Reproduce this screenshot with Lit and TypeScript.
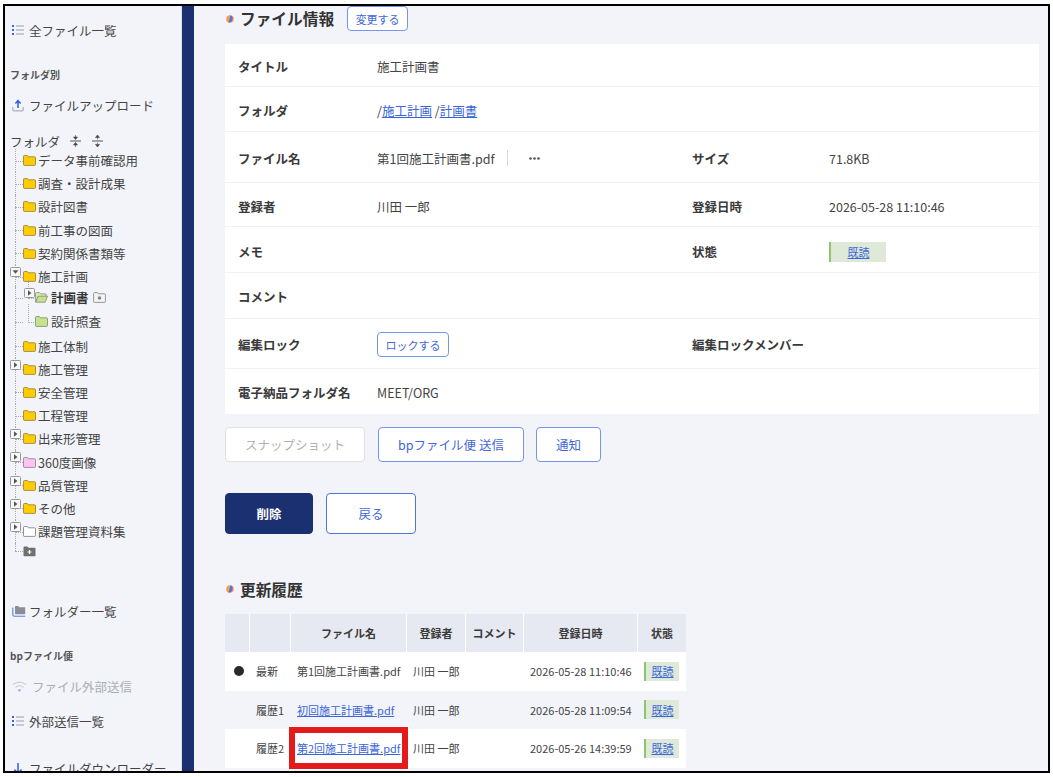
import { LitElement, css, html, svg } from 'lit';
import { customElement } from 'lit/decorators.js';
import { classMap } from 'lit/directives/class-map.js';

type Node = {
  label: string;
  kind?: 'yellow' | 'pink' | 'white' | 'green' | 'open';
  exp?: 'open' | 'closed';
  child?: boolean;
  nudge?: string;
  bold?: boolean;
};

const TREE: Node[] = [
  { label: 'データ事前確認用' },
  { label: '調査・設計成果' },
  { label: '設計図書' },
  { label: '前工事の図面' },
  { label: '契約関係書類等' },
  { label: '施工計画', exp: 'open' },
  { label: '計画書', kind: 'open', exp: 'closed', child: true, nudge: 'up2', bold: true },
  { label: '設計照査', kind: 'green', child: true, nudge: 'down1' },
  { label: '施工体制', nudge: 'down1' },
  { label: '施工管理', exp: 'closed' },
  { label: '安全管理' },
  { label: '工程管理' },
  { label: '出来形管理', exp: 'closed' },
  { label: '360度画像', kind: 'pink', exp: 'closed' },
  { label: '品質管理', exp: 'closed' },
  { label: 'その他', exp: 'closed' },
  { label: '課題管理資料集', kind: 'white', exp: 'closed' },
];

const HISTORY = [
  { mark: true, tag: '最新', file: '第1回施工計画書.pdf', link: false, date: '2026-05-28 11:10:46', alt: false, red: false },
  { mark: false, tag: '履歴1', file: '初回施工計画書.pdf', link: true, date: '2026-05-28 11:09:54', alt: true, red: false },
  { mark: false, tag: '履歴2', file: '第2回施工計画書.pdf', link: true, date: '2026-05-26 14:39:59', alt: false, red: true },
];

const FOLDER_COLORS = {
  yellow: ['#ffcc00', '#8f7d3a'],
  pink: ['#ffc4f2', '#8a7a88'],
  white: ['#ffffff', '#77797f'],
  green: ['#c6e28e', '#7d8a6a'],
};

const folderIcon = (kind: Node['kind'] = 'yellow') => {
  if (kind === 'open') {
    return html`<svg class="folder" width="13" height="11" viewBox="0 0 13 11">
      <path d="M.6 10V1.400c0-.5.3-.8.8-.8h3l1.100 1.300h4.800c.5 0 .8.3.8.8v1.300" fill="#dcebbd" stroke="#7d8a6a" stroke-width=".8"/>
      <path d="M.6 10.200l2.400-6h9.500l-2.400 6z" fill="#c6e28e" stroke="#7d8a6a" stroke-width=".8"/>
    </svg>`;
  }
  const [fill, line] = FOLDER_COLORS[kind];
  return html`<svg class="folder" width="13" height="11" viewBox="0 0 13 11">
    <path d="M.5 1.400C.5.900.8.500 1.300.500h3l1.100 1.300h6.300c.5 0 .8.300.8.800v7c0 .5-.3.800-.8.800H1.300c-.5 0-.8-.3-.8-.8z" fill=${fill} stroke=${line} stroke-width=".8"/>
  </svg>`;
};

const listIcon = html`<svg width="12" height="10" viewBox="0 0 12 10">
  <path d="M0 0h2v2H0zM0 4h2v2H0zM0 8h2v2H0z" fill="#3f63e0"/>
  <path d="M4 1h8M4 5h8M4 9h8" stroke="#9a9ea8" stroke-width="1"/>
</svg>`;

const uploadIcon = html`<svg width="12" height="13" viewBox="0 0 12 13">
  <path d="M.8 8v2.600c0 .8.5 1.300 1.200 1.300h8c.7 0 1.200-.5 1.200-1.300V8" fill="none" stroke="#a9adb5" stroke-width="1.200"/>
  <path d="M6 9V2M3.400 4.400L6 1.600l2.600 2.800" fill="none" stroke="#2f5fe0" stroke-width="1.500"/>
</svg>`;

const foldersIcon = html`<svg width="14" height="12" viewBox="0 0 14 12">
  <path d="M.8 2.500v7c0 1 .6 1.700 1.600 1.700h10.800" fill="none" stroke="#5b7de8" stroke-width="1.100"/>
  <path d="M3 1.600c0-.4.2-.6.6-.6h2.600l1 1.200h5.400c.4 0 .6.2.6.6v5.800c0 .4-.2.6-.6.6H3.600c-.4 0-.6-.2-.6-.6z" fill="#8b8e96"/>
</svg>`;

const wifiIcon = html`<svg width="15" height="11" viewBox="0 0 15 11">
  <path d="M.8 3.600C4.600.4 10.400.4 14.200 3.600M3.600 6.200c2.300-1.700 5.500-1.700 7.800 0" fill="none" stroke="#c3c7cf" stroke-width="1.100"/>
  <circle cx="7.500" cy="9.200" r="1.300" fill="#9db2ee"/>
</svg>`;

const downIcon = html`<svg width="12" height="13" viewBox="0 0 12 13">
  <path d="M6 1v10M2.400 7.600L6 11.200l3.600-3.600" fill="none" stroke="#2f5fe0" stroke-width="1.500"/>
</svg>`;

const foldAll = (arrowsIn: boolean) => html`<svg class="fold" width="11" height="12" viewBox="0 0 11 12">
  <path d="M0 6h11" stroke="#555" stroke-width="1"/>
  ${arrowsIn
    ? svg`<path d="M5.500 0v2M3.500 2h4L5.500 4.600zM5.500 12v-2M3.500 10h4L5.500 7.400z" fill="#444" stroke="#444" stroke-width=".6"/>`
    : svg`<path d="M5.500 2.500v2M3.500 2.600h4L5.500 0zM5.500 9.500v-2M3.500 9.400h4L5.500 12z" fill="#444" stroke="#444" stroke-width=".6"/>`}
</svg>`;

const expander = (state: 'open' | 'closed') => html`<svg class="exp" width="11" height="10" viewBox="0 0 11 10">
  <rect x=".5" y=".5" width="10" height="9" rx="1" fill="#f7f7f7" stroke="#999"/>
  ${state === 'open'
    ? svg`<path d="M2.600 3.200h5.800L5.500 6.800z" fill="#555"/>`
    : svg`<path d="M4 2.200v5.600L7.400 5z" fill="#555"/>`}
</svg>`;

const dot = html`<svg class="dot" width="8" height="8" viewBox="0 0 8 8">
  <circle cx="4" cy="4" r="3.800" fill="#f59a52"/>
  <path d="M4.400.2A3.800 3.800 0 0 1 2.200 7.400C3.600 5.400 3.800 2.400 4.400.2z" fill="#4f72e6"/>
</svg>`;

@customElement('app-root')
export class AppRoot extends LitElement {
  static styles = css`
    :host {
      display: block;
      padding: 4px 3px;
      height: 777px;
      box-sizing: border-box;
      background: #fff;
      font-family: 'Noto Sans CJK JP', 'Noto Sans', sans-serif;
      font-size: 12.5px;
      color: #444;
    }
    .frame {
      display: flex;
      height: 769px;
      border: 2px solid #000;
      box-sizing: border-box;
      overflow: hidden;
      background: #f2f4f9;
    }
    a {
      color: #3a66d8;
      text-decoration: underline;
    }

    /* sidebar */
    .side {
      width: 177px;
      flex: none;
      padding: 12px 0 0 7px;
      box-sizing: border-box;
      border-right: 1px solid #dfe1e6;
    }
    .nav {
      display: flex;
      align-items: center;
      gap: 5px;
      height: 24px;
      white-space: nowrap;
    }
    .nav.tight {
      gap: 3px;
    }
    .nav.off {
      color: #aaadb3;
    }
    .sec {
      height: 16px;
      line-height: 16px;
      margin-left: -2px;
      font-size: 10px;
      font-weight: 700;
      color: #555;
    }
    .folders-head {
      display: flex;
      align-items: center;
      height: 20px;
      margin: 14px 0 0 -2px;
      color: #444;
    }
    .fold {
      margin-left: 10px;
    }
    .fold + .fold {
      margin-left: 11px;
    }
    .tree {
      margin: -2px 0 0 -7px;
    }
    .row {
      position: relative;
      display: flex;
      align-items: center;
      gap: 2px;
      height: 23.2px;
      padding-left: 18px;
      white-space: nowrap;
    }
    .row::before {
      content: '';
      position: absolute;
      left: 10px;
      top: 0;
      bottom: 0;
      border-left: 1px dotted #aaa;
    }
    .row::after {
      content: '';
      position: absolute;
      left: 10px;
      width: 8px;
      top: 50%;
      border-top: 1px dotted #aaa;
    }
    .row.child {
      gap: 3px;
      padding-left: 30px;
    }
    .row.child .line {
      position: absolute;
      left: 23px;
      top: -6px;
      height: 18px;
      width: 7px;
      border-left: 1px dotted #aaa;
      border-bottom: 1px dotted #aaa;
    }
    .row.up2 {
      margin-top: -2px;
    }
    .row.down1 {
      margin-top: 1px;
    }
    .row.bold {
      font-weight: 700;
      color: #333;
    }
    .row.add {
      height: 16px;
    }
    .row.add::before {
      bottom: 50%;
    }
    .exp {
      position: absolute;
      left: 5px;
      top: 2px;
      z-index: 1;
    }
    .row.child .exp {
      left: 19px;
    }
    .cam {
      margin-left: 1px;
    }

    /* navy strip */
    .strip {
      width: 12px;
      flex: none;
      background: #1b3070;
    }

    /* main */
    .main {
      flex: 1;
      min-width: 0;
      padding: 0 9px 0 31px;
    }
    .head {
      display: flex;
      align-items: center;
      height: 25px;
      margin-bottom: 13px;
    }
    .head h2 {
      margin: 0 13px 0 6px;
      font-size: 15.7px;
      font-weight: 700;
      color: #333;
    }
    .dot {
      margin-left: 1px;
    }
    .btn {
      display: inline-flex;
      align-items: center;
      justify-content: center;
      box-sizing: border-box;
      background: #fff;
      border: 1.5px solid #7795ea;
      border-radius: 4px;
      color: #4267d8;
      white-space: nowrap;
    }
    .btn.small {
      height: 25px;
      font-size: 11px;
    }
    .info {
      display: grid;
      grid-template-rows: 43px 45px 51px 44px 46px 46px 50px 45px;
      background: #fff;
    }
    .info-row {
      display: grid;
      grid-template-columns: 152px 315px 137px 1fr;
      align-items: center;
      border-bottom: 1px solid #f1f2f5;
      padding-top: 2px;
      box-sizing: border-box;
    }
    .info-row:nth-child(4),
    .info-row:nth-child(5) {
      padding-top: 4px;
    }
    .info-row:last-child {
      border-bottom: none;
    }
    .lab {
      padding-left: 13px;
      font-weight: 700;
      color: #3a3a3a;
      white-space: nowrap;
    }
    .lab.second {
      padding-left: 0;
    }
    .val {
      white-space: nowrap;
      display: flex;
      align-items: center;
    }
    .sep {
      width: 1px;
      height: 16px;
      background: #d9d9d9;
      margin: 0 21px 0 13px;
    }
    .more {
      width: 11px;
      height: 3px;
    }
    .badge {
      display: flex;
      align-items: center;
      justify-content: center;
      box-sizing: border-box;
      background: #dfe9d8;
      border-left: 2px solid #8cc56f;
      font-size: 11px;
    }
    .badge.big {
      width: 57px;
      height: 20px;
    }
    .actions {
      display: flex;
      margin-top: 13px;
    }
    .btn.mid {
      height: 35px;
      font-size: 12.5px;
    }
    .snap {
      width: 140px;
      margin-right: 13px;
      border-color: #e2e2e2;
      color: #b4b1ad;
    }
    .bp {
      width: 146px;
      margin-right: 12px;
    }
    .notify {
      width: 65px;
    }
    .actions2 {
      display: flex;
      margin-top: 31px;
      gap: 13px;
    }
    .btn.large {
      height: 41px;
      font-size: 12.5px;
      border-width: 1px;
      border-color: #4f74e0;
    }
    .del {
      width: 88px;
      background: #1b3070;
      border-color: #1b3070 !important;
      color: #fff;
      font-weight: 700;
    }
    .back {
      width: 90px;
    }
    .head.hist {
      margin: 43px 0 13px;
      height: 24px;
    }

    /* history table */
    .hist-table {
      width: 461px;
      font-size: 11px;
    }
    .tr {
      display: grid;
      grid-template-columns: 24px 40px 115px 58px 57px 113px 48px;
      column-gap: 1px;
      height: 38.5px;
      align-items: center;
      background: #fff;
    }
    .tr.alt {
      background: #f2f4f9;
    }
    .tr.th {
      height: 38px;
      background: #fff;
      align-items: stretch;
      font-weight: 700;
      color: #3a3a3a;
    }
    .tr.th > div {
      display: flex;
      align-items: center;
      justify-content: center;
      background: #e6e9f2;
      white-space: nowrap;
    }
    .td {
      white-space: nowrap;
      display: flex;
      align-items: center;
    }
    .td.mark {
      justify-content: center;
      padding-left: 3px;
    }
    .blob {
      width: 10px;
      height: 10px;
      border-radius: 50%;
      background: #2a2a2a;
    }
    .td.tag {
      padding-left: 6px;
    }
    .td.file {
      position: relative;
      align-self: stretch;
      padding-left: 6px;
    }
    .td.user {
      padding-left: 6px;
    }
    .td.date {
      padding-left: 6px;
    }
    .td.state {
      padding-left: 6px;
    }
    .badge.tiny {
      width: 35px;
      height: 19px;
    }
    .redbox {
      position: absolute;
      inset: -2px -2px -1px -2px;
      border: 6px solid #e51a1a;
      box-shadow: 0 0 0 1px #fff;
      pointer-events: none;
    }
  `;

  private infoRow(label: string, value: unknown, label2 = '', value2: unknown = '') {
    return html`<div class="info-row">
      <div class="lab">${label}</div>
      <div class="val">${value}</div>
      <div class="lab second">${label2}</div>
      <div class="val">${value2}</div>
    </div>`;
  }

  private renderSide() {
    return html`<aside class="side">
      <div class="nav">${listIcon}全ファイル一覧</div>
      <div class="sec" style="margin-top:25px">フォルダ別</div>
      <div class="nav" style="margin-top:10px">${uploadIcon}ファイルアップロード</div>
      <div class="folders-head">フォルダ${foldAll(true)}${foldAll(false)}</div>
      <div class="tree">
        ${TREE.map(
          (n) => html`<div
            class=${classMap({ row: true, child: !!n.child, bold: !!n.bold, [n.nudge ?? 'plain']: true })}
          >
            ${n.child ? html`<span class="line"></span>` : ''}
            ${n.exp ? expander(n.exp) : ''}${folderIcon(n.kind)}<span>${n.label}</span>
            ${n.bold
              ? html`<svg class="cam" width="13" height="11" viewBox="0 0 13 11">
                  <path d="M.6 1.400C.6.900.9.600 1.400.600h3l1 1.200h6.200c.5 0 .8.300.8.800v7c0 .5-.3.800-.8.800H1.400c-.5 0-.8-.3-.8-.8z" fill="#f4f4f4" stroke="#808080" stroke-width=".8"/>
                  <circle cx="6.500" cy="6" r="1.800" fill="#888"/>
                </svg>`
              : ''}
          </div>`,
        )}
        <div class="row add">
          <svg width="13" height="11" viewBox="0 0 13 11">
            <path d="M.5 1.600C.5 1 .9.600 1.400.600h3l1.100 1.200h6c.6 0 1 .4 1 1v6.400c0 .6-.4 1-1 1h-10c-.5 0-1-.4-1-1z" fill="#6f6f6f"/>
            <path d="M6.500 4v4M4.500 6h4" stroke="#fff" stroke-width="1.200"/>
          </svg>
        </div>
      </div>
      <div class="nav tight" style="margin-top:40px">${foldersIcon}フォルダー一覧</div>
      <div class="sec" style="margin-top:25px">bpファイル便</div>
      <div class="nav off" style="margin-top:10px">${wifiIcon}ファイル外部送信</div>
      <div class="nav" style="margin-top:11px">${listIcon}外部送信一覧</div>
      <div class="nav" style="margin-top:23px">${downIcon}ファイルダウンローダー</div>
    </aside>`;
  }

  private renderMain() {
    return html`<main class="main">
      <div class="head">
        ${dot}<h2>ファイル情報</h2>
        <span class="btn small" style="width:61px">変更する</span>
      </div>
      <div class="info">
        ${this.infoRow('タイトル', '施工計画書')}
        ${this.infoRow('フォルダ', html`/<a>施工計画</a>&nbsp;/<a>計画書</a>`)}
        ${this.infoRow(
          'ファイル名',
          html`第1回施工計画書.pdf<span class="sep"></span>
            <svg class="more" viewBox="0 0 11 3"><circle cx="1.500" cy="1.500" r="1.300" fill="#555"/><circle cx="5.500" cy="1.500" r="1.300" fill="#555"/><circle cx="9.500" cy="1.500" r="1.300" fill="#555"/></svg>`,
          'サイズ',
          '71.8KB',
        )}
        ${this.infoRow('登録者', '川田 一郎', '登録日時', '2026-05-28 11:10:46')}
        ${this.infoRow('メモ', '', '状態', html`<span class="badge big"><a>既読</a></span>`)}
        ${this.infoRow('コメント', '')}
        ${this.infoRow(
          '編集ロック',
          html`<span class="btn small" style="width:72px">ロックする</span>`,
          '編集ロックメンバー',
        )}
        ${this.infoRow('電子納品フォルダ名', 'MEET/ORG')}
      </div>
      <div class="actions">
        <span class="btn mid snap">スナップショット</span>
        <span class="btn mid bp">bpファイル便 送信</span>
        <span class="btn mid notify">通知</span>
      </div>
      <div class="actions2">
        <span class="btn large del">削除</span>
        <span class="btn large back">戻る</span>
      </div>
      <div class="head hist">${dot}<h2>更新履歴</h2></div>
      <div class="hist-table">
        <div class="tr th">
          <div></div>
          <div></div>
          <div>ファイル名</div>
          <div>登録者</div>
          <div>コメント</div>
          <div>登録日時</div>
          <div>状態</div>
        </div>
        ${HISTORY.map(
          (r) => html`<div class=${classMap({ tr: true, alt: r.alt })}>
            <div class="td mark">${r.mark ? html`<span class="blob"></span>` : ''}</div>
            <div class="td tag">${r.tag}</div>
            <div class="td file">
              ${r.link ? html`<a>${r.file}</a>` : r.file}
              ${r.red ? html`<span class="redbox"></span>` : ''}
            </div>
            <div class="td user">川田 一郎</div>
            <div class="td"></div>
            <div class="td date">${r.date}</div>
            <div class="td state"><span class="badge tiny"><a>既読</a></span></div>
          </div>`,
        )}
      </div>
    </main>`;
  }

  render() {
    return html`<div class="frame">
      ${this.renderSide()}
      <div class="strip"></div>
      ${this.renderMain()}
    </div>`;
  }
}
